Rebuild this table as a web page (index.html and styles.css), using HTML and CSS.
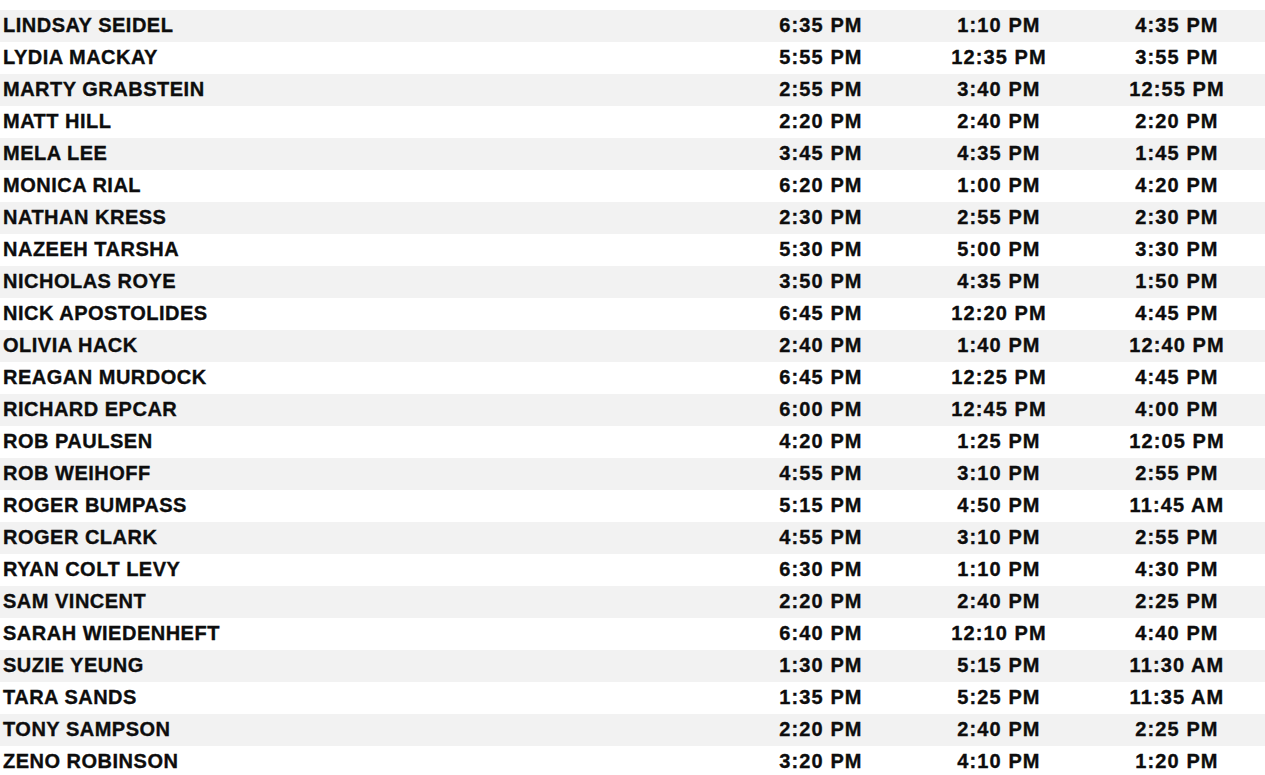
FILE: index.html
```html
<!DOCTYPE html>
<html>
<head>
<meta charset="utf-8">
<link rel="stylesheet" href="styles.css">
</head>
<body>
<table class="schedule">
<colgroup><col class="c-name"><col class="c-time"><col class="c-time"><col class="c-time"></colgroup>
<tbody>
<tr><td class="name">LINDSAY SEIDEL</td><td>6:35 PM</td><td>1:10 PM</td><td>4:35 PM</td></tr>
<tr><td class="name">LYDIA MACKAY</td><td>5:55 PM</td><td>12:35 PM</td><td>3:55 PM</td></tr>
<tr><td class="name">MARTY GRABSTEIN</td><td>2:55 PM</td><td>3:40 PM</td><td>12:55 PM</td></tr>
<tr><td class="name">MATT HILL</td><td>2:20 PM</td><td>2:40 PM</td><td>2:20 PM</td></tr>
<tr><td class="name">MELA LEE</td><td>3:45 PM</td><td>4:35 PM</td><td>1:45 PM</td></tr>
<tr><td class="name">MONICA RIAL</td><td>6:20 PM</td><td>1:00 PM</td><td>4:20 PM</td></tr>
<tr><td class="name">NATHAN KRESS</td><td>2:30 PM</td><td>2:55 PM</td><td>2:30 PM</td></tr>
<tr><td class="name">NAZEEH TARSHA</td><td>5:30 PM</td><td>5:00 PM</td><td>3:30 PM</td></tr>
<tr><td class="name">NICHOLAS ROYE</td><td>3:50 PM</td><td>4:35 PM</td><td>1:50 PM</td></tr>
<tr><td class="name">NICK APOSTOLIDES</td><td>6:45 PM</td><td>12:20 PM</td><td>4:45 PM</td></tr>
<tr><td class="name">OLIVIA HACK</td><td>2:40 PM</td><td>1:40 PM</td><td>12:40 PM</td></tr>
<tr><td class="name">REAGAN MURDOCK</td><td>6:45 PM</td><td>12:25 PM</td><td>4:45 PM</td></tr>
<tr><td class="name">RICHARD EPCAR</td><td>6:00 PM</td><td>12:45 PM</td><td>4:00 PM</td></tr>
<tr><td class="name">ROB PAULSEN</td><td>4:20 PM</td><td>1:25 PM</td><td>12:05 PM</td></tr>
<tr><td class="name">ROB WEIHOFF</td><td>4:55 PM</td><td>3:10 PM</td><td>2:55 PM</td></tr>
<tr><td class="name">ROGER BUMPASS</td><td>5:15 PM</td><td>4:50 PM</td><td>11:45 AM</td></tr>
<tr><td class="name">ROGER CLARK</td><td>4:55 PM</td><td>3:10 PM</td><td>2:55 PM</td></tr>
<tr><td class="name">RYAN COLT LEVY</td><td>6:30 PM</td><td>1:10 PM</td><td>4:30 PM</td></tr>
<tr><td class="name">SAM VINCENT</td><td>2:20 PM</td><td>2:40 PM</td><td>2:25 PM</td></tr>
<tr><td class="name">SARAH WIEDENHEFT</td><td>6:40 PM</td><td>12:10 PM</td><td>4:40 PM</td></tr>
<tr><td class="name">SUZIE YEUNG</td><td>1:30 PM</td><td>5:15 PM</td><td>11:30 AM</td></tr>
<tr><td class="name">TARA SANDS</td><td>1:35 PM</td><td>5:25 PM</td><td>11:35 AM</td></tr>
<tr><td class="name">TONY SAMPSON</td><td>2:20 PM</td><td>2:40 PM</td><td>2:25 PM</td></tr>
<tr><td class="name">ZENO ROBINSON</td><td>3:20 PM</td><td>4:10 PM</td><td>1:20 PM</td></tr>
</tbody>
</table>
</body>
</html>
```
FILE: styles.css
```css
html, body {
  margin: 0;
  padding: 0;
  background: #ffffff;
}
body {
  padding-top: 10px;
  overflow: hidden;
}
.schedule {
  width: 1266px;
  border-collapse: collapse;
  table-layout: fixed;
  font-family: "Liberation Sans", Arial, sans-serif;
  font-weight: 700;
  font-size: 20px;
  color: #0d0d0d;
  -webkit-text-stroke: 0.35px #0d0d0d;
}
.c-name { width: 732px; }
.c-time { width: 178px; }
.schedule tr:nth-child(odd) { background: #f2f2f2; }
.schedule td {
  height: 32px;
  box-sizing: border-box;
  padding: 0 0 2px 0;
  text-align: center;
  line-height: 30px;
  white-space: nowrap;
  letter-spacing: 1.1px;
}
.schedule td.name {
  text-align: left;
  padding-left: 3px;
  letter-spacing: 0.5px;
}
```
